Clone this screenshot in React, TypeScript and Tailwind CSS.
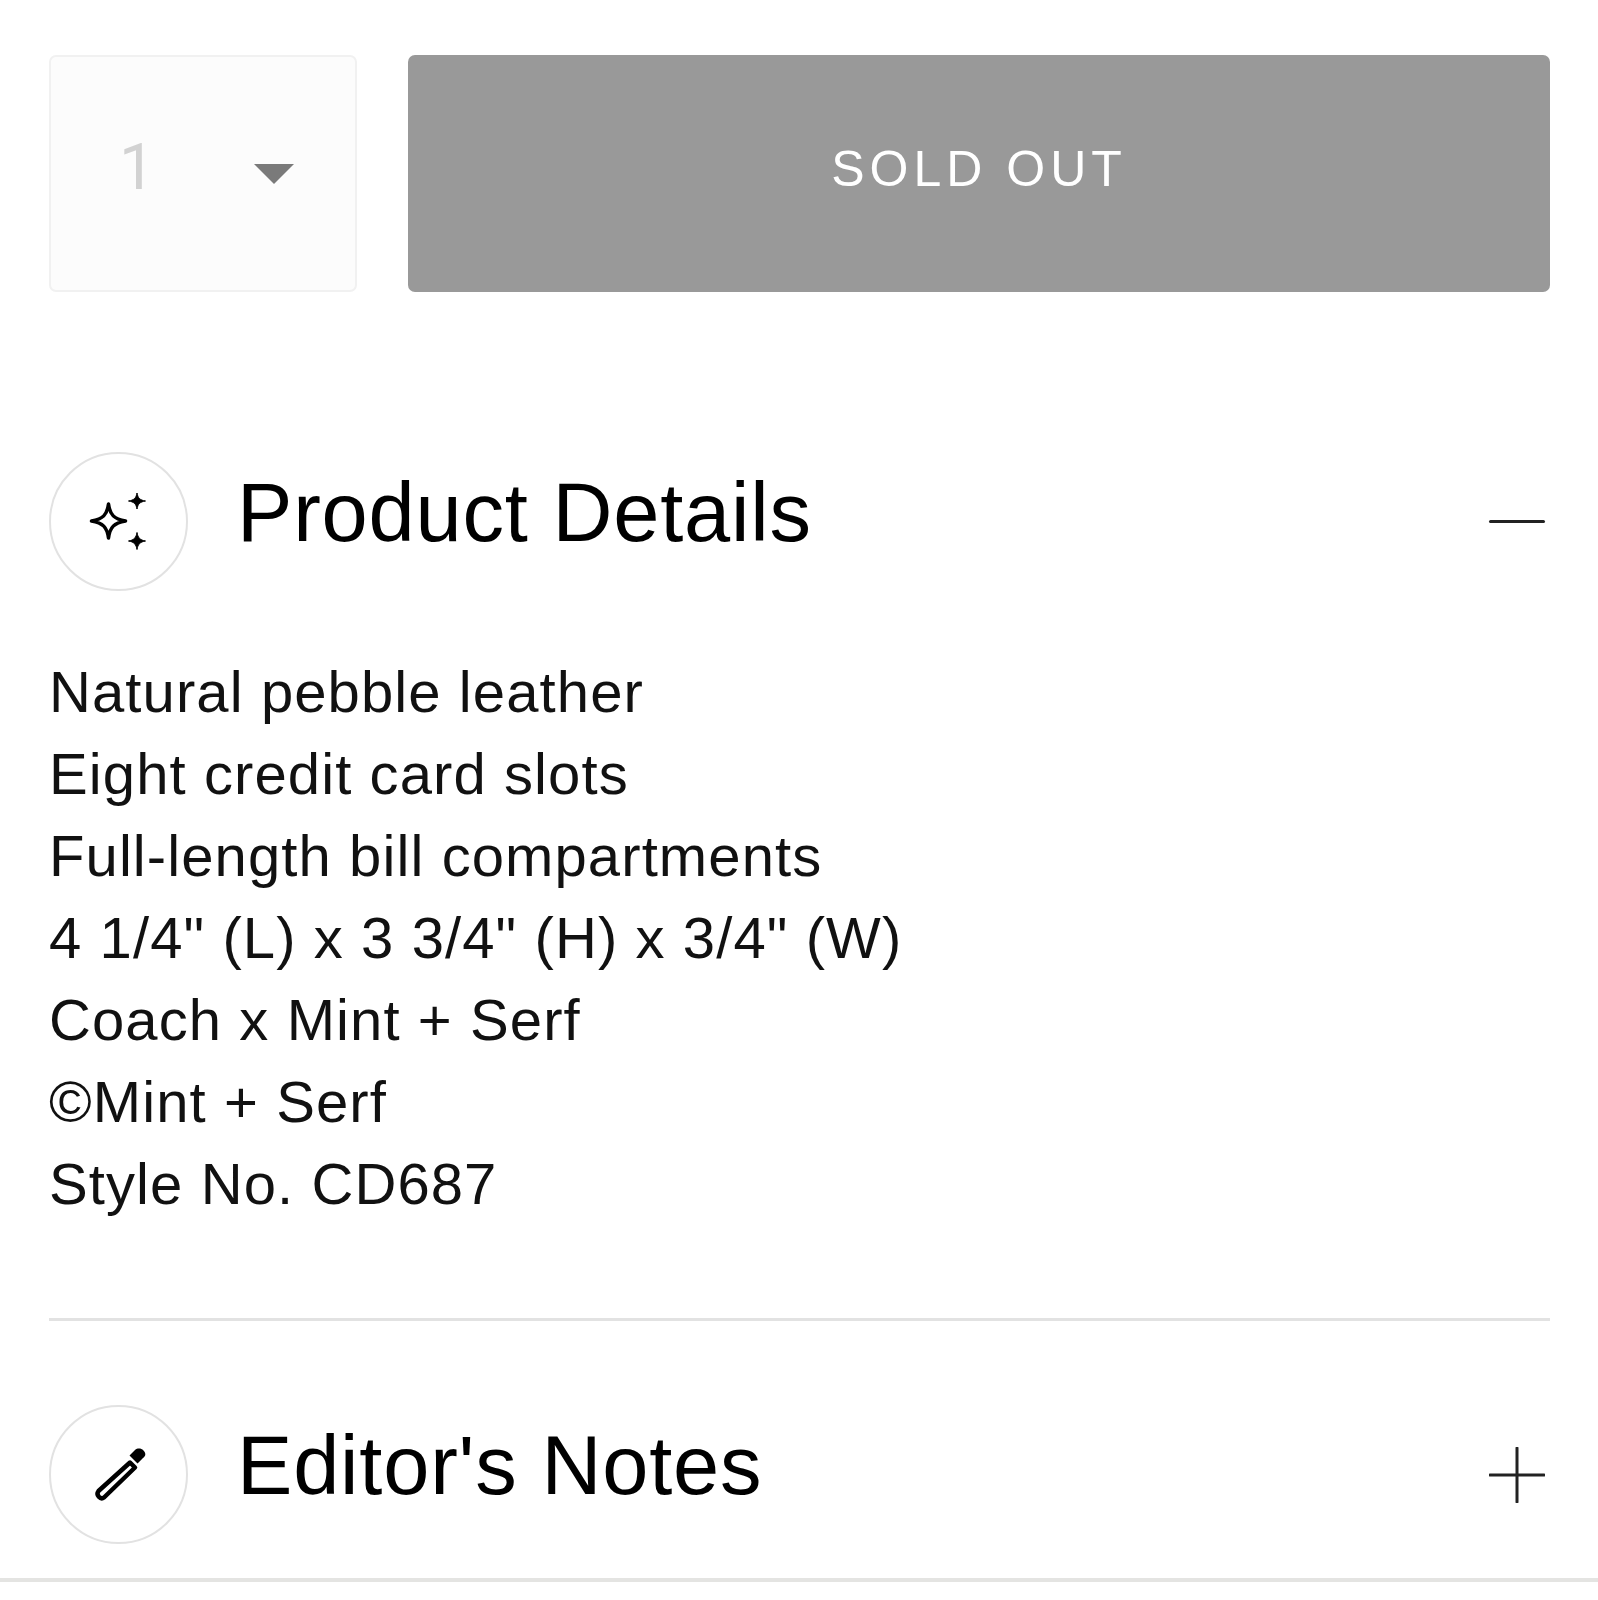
export default function App() {
  const lines = [
    "Natural pebble leather",
    "Eight credit card slots",
    "Full-length bill compartments",
    '4 1/4" (L) x 3 3/4" (H) x 3/4" (W)',
    "Coach x Mint + Serf",
    "©Mint + Serf",
    "Style No. CD687",
  ];
  return (
    <div className="h-[1600px] w-[1598px] overflow-hidden bg-white font-['Liberation_Sans',sans-serif] text-black">
      <div className="pl-[49px] pr-[48px] pt-[55px]">
        <div className="flex gap-[51px]">
          <div className="flex h-[237px] w-[308px] shrink-0 items-center rounded-[7px] border-[2px] border-[#f1f1f1] bg-[#fcfcfc] pb-[12px] pl-[68px]">
            <span className="w-[38px] font-['Roboto',sans-serif] text-[64px] leading-none text-[#d2d2d2]">1</span>
            <svg className="ml-[97px] mt-[12px]" width="40" height="20" viewBox="0 0 40 20">
              <path d="M0 0H40L20 20Z" fill="#7a7a7a" />
            </svg>
          </div>
          <div className="flex h-[237px] flex-1 items-center justify-center rounded-[7px] bg-[#999999] pb-[8px]">
            <span className="text-[50px] tracking-[5px] text-white">SOLD OUT</span>
          </div>
        </div>

        <div className="mt-[160px] flex items-center">
          <div className="flex h-[139px] w-[139px] shrink-0 items-center justify-center rounded-full border-[2px] border-[#e2e2e2]">
            <svg width="60" height="60" viewBox="0 0 60 60">
              <path d="M19.500 12C21 23 25 27 36.500 29C25 31 21 35 19.500 46C18 35 14 31 2.500 29C14 27 18 23 19.500 12Z" fill="none" stroke="#000" strokeWidth="3.500" strokeLinejoin="round" />
              <path d="M48 1C48.800 6 51 8.200 56.500 9C51 9.800 48.800 12 48 17C47.200 12 45 9.800 39.500 9C45 8.200 47.200 6 48 1Z" fill="#000" stroke="#000" strokeWidth="1" />
              <path d="M48 40.500C48.800 45.500 51 48.200 56.500 49C51 49.800 48.800 52.500 48 57.500C47.200 52.500 45 49.800 39.500 49C45 48.200 47.200 45.500 48 40.500Z" fill="#000" stroke="#000" strokeWidth="1" />
            </svg>
          </div>
          <h2 className="ml-[49px] flex-1 pb-[18px] text-[83px] leading-none font-normal tracking-[0.8px]">Product Details</h2>
          <div className="mr-[5px] h-[3px] w-[56px] rounded-full bg-[#222222]" />
        </div>

        <div className="mt-[60px] text-[58px] leading-[82px] tracking-[1.1px] text-[#111111]">
          {lines.map((l) => (
            <div key={l}>{l}</div>
          ))}
        </div>

        <div className="mt-[93px] h-[3px] bg-[#e2e2e2]" />

        <div className="mt-[84px] flex items-center">
          <div className="flex h-[139px] w-[139px] shrink-0 items-center justify-center rounded-full border-[2px] border-[#e2e2e2]">
            <svg width="60" height="60" viewBox="0 0 60 60">
              <path d="M9.500 46L41 17.500L46 22.500L15 52.500C11.500 55 6.500 50 9.500 46Z" fill="none" stroke="#000" strokeWidth="4.500" strokeLinejoin="round" />
              <path d="M40.500 10.500L46 5C48.500 3 52 3 54.500 5.500C57 8 57 11 54 13L48.500 18.500Z" fill="#000" />
            </svg>
          </div>
          <h2 className="ml-[49px] flex-1 pb-[18px] text-[83px] leading-none font-normal tracking-[0.8px]">Editor's Notes</h2>
          <svg className="mr-[5px]" width="56" height="56" viewBox="0 0 56 56">
            <path d="M1 28H55M28 1V55" stroke="#222222" strokeWidth="3" strokeLinecap="round" />
          </svg>
        </div>
      </div>
      <div className="mt-[34px] h-[4px] bg-[#e4e4e2]" />
    </div>
  );
}
